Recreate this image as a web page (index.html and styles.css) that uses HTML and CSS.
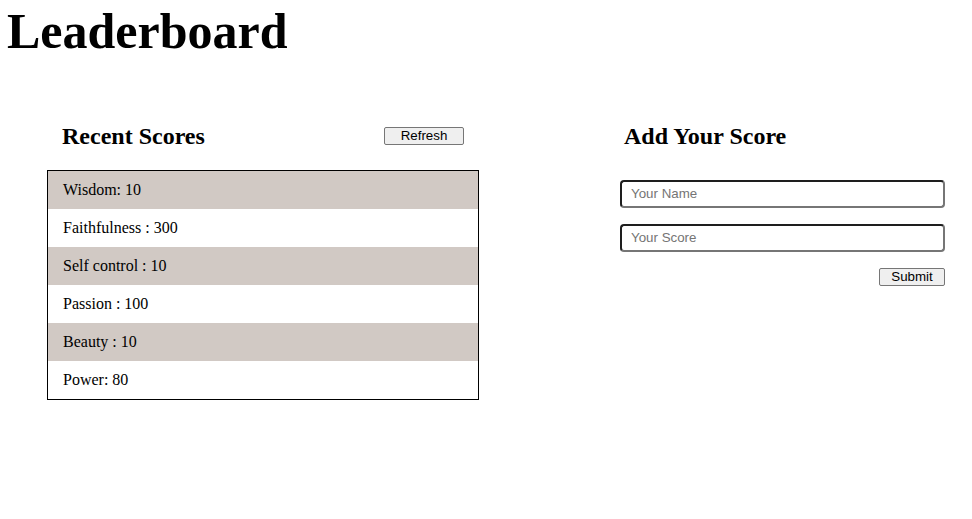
FILE: index.html
```html
<!DOCTYPE html>
<html lang="en">
<head>
<meta charset="utf-8">
<title>Leaderboard</title>
<link rel="stylesheet" href="styles.css">
</head>
<body>
<h1 class="title">Leaderboard</h1>
<main class="main">
  <section class="scores">
    <div class="scores-head">
      <h2 class="heading">Recent Scores</h2>
      <button class="btn btn-refresh" type="button">Refresh</button>
    </div>
    <ul class="list">
      <li class="row">Wisdom: 10</li>
      <li class="row">Faithfulness : 300</li>
      <li class="row">Self control : 10</li>
      <li class="row">Passion : 100</li>
      <li class="row">Beauty : 10</li>
      <li class="row">Power: 80</li>
    </ul>
  </section>
  <section class="add">
    <h2 class="heading add-heading">Add Your Score</h2>
    <form class="form">
      <input class="field" type="text" placeholder="Your Name">
      <input class="field" type="text" placeholder="Your Score">
      <div class="actions"><button class="btn btn-submit" type="button">Submit</button></div>
    </form>
  </section>
</main>
</body>
</html>
```

FILE: styles.css
```css
* { box-sizing: border-box; }
body {
  margin: 0;
  font-family: "Liberation Serif", "Times New Roman", serif;
  color: #000;
  background: #fff;
}
.title {
  margin: 0;
  padding: 3px 0 0 7px;
  font-size: 50px;
  font-weight: bold;
  line-height: 1.15;
}
.main {
  display: flex;
  align-items: flex-start;
  padding: 0 0 0 47px;
  margin-top: 61px;
}
.scores { width: 432px; }
.scores-head {
  display: flex;
  align-items: center;
  justify-content: space-between;
  padding: 0 15px 0 15px;
  height: 28px;
}
.heading {
  margin: 0;
  font-size: 24px;
  font-weight: bold;
  line-height: 28px;
}
.btn {
  font-family: "Liberation Sans", Arial, sans-serif;
  font-size: 13.33px;
  height: 18px;
  padding: 0;
  background: #efefef;
  border: 1px solid #767676;
  border-radius: 2px;
  color: #000;
  line-height: 15px;
}
.btn-refresh { width: 80px; }
.list {
  list-style: none;
  margin: 20px 0 0;
  padding: 0;
  border: 1px solid #000;
}
.row {
  height: 38px;
  line-height: 38px;
  padding-left: 15px;
  font-size: 16px;
}
.row:nth-child(odd) { background: #d1c9c4; }
.add {
  width: 325px;
  margin-left: 141px;
}
.add-heading { padding-left: 4px; }
.form {
  display: flex;
  flex-direction: column;
  gap: 16px;
  margin-top: 30px;
}
.field {
  width: 325px;
  height: 28px;
  border: 2px solid #767676;
  border-top-color: #1e1e1e;
  border-left-color: #1e1e1e;
  border-radius: 4px;
  padding: 0 9px;
  font-family: "Liberation Sans", Arial, sans-serif;
  font-size: 13.33px;
  outline: none;
}
.field::placeholder { color: #757575; }
.actions { display: flex; justify-content: flex-end; }
.btn-submit { width: 66px; }
```
